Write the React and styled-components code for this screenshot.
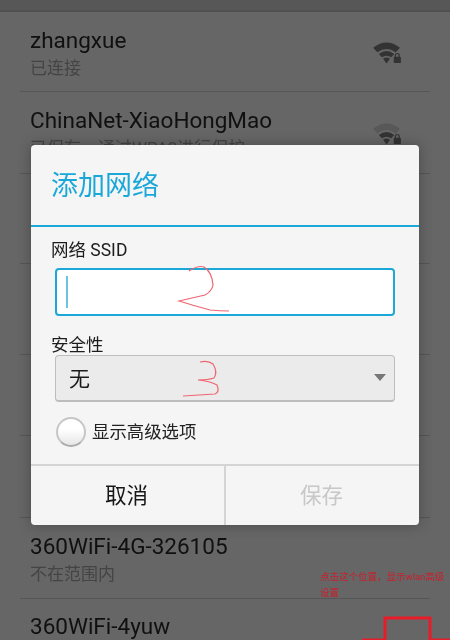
import React from "react";
import styled, { createGlobalStyle } from "styled-components";

const Global = createGlobalStyle`
  html, body { margin: 0; padding: 0; background: #666; }
  body { font-family: Roboto, "Noto Sans CJK SC", sans-serif; }
`;

const Screen = styled.div`
  position: relative;
  width: 450px;
  height: 640px;
  overflow: hidden;
  background: #666666;
  filter: blur(0.35px);
`;

const TopBar = styled.div`
  height: 10px;
  background: #575757;
  border-bottom: 2px solid #505050;
`;

const List = styled.div`
  padding: 0 20px;
`;

const Row = styled.div`
  box-sizing: border-box;
  height: ${(p) => p.$h}px;
  padding: ${(p) => p.$top}px 10px 0;
  border-bottom: 1px solid #565656;
  display: flex;
  justify-content: space-between;
`;

const RowText = styled.div`
  display: flex;
  flex-direction: column;
`;

const Name = styled.div`
  font-size: 22.5px;
  line-height: 27px;
  color: #101010;
`;

const Status = styled.div`
  font-size: 17px;
  line-height: 23px;
  margin-top: 3px;
  color: #444444;
`;

const WifiSlot = styled.div`
  margin: ${(p) => p.$top}px 18px 0 0;
  width: 29px;
  height: 24px;
`;

const Wifi = ({ faded }) => (
  <svg width="29" height="23" viewBox="0 0 30 24">
    <path d="M0 6 Q14 -5 28 6 L23.6 10.8 Q14 4 4.4 10.8 Z" fill={faded ? "#585858" : "#333333"} />
    <path d="M6 12.4 Q14 6.2 22 12.4 L18.9 16 Q14 12.6 9.1 16 Z" fill="#333333" />
    <path d="M10.4 17.4 Q14 14.7 17.6 17.4 L14 22.5 Z" fill="#333333" />
    <rect x="21.5" y="15.5" width="7.5" height="6.5" rx="1" fill="#333333" />
    <path d="M23.2 16 V14 a2 2 0 0 1 4 0 V16" fill="none" stroke="#333333" strokeWidth="1.3" />
  </svg>
);

const Dialog = styled.div`
  position: absolute;
  left: 31px;
  top: 145px;
  box-sizing: border-box;
  width: 388px;
  height: 380px;
  display: flex;
  flex-direction: column;
  background: #f5f5f5;
  border-radius: 4px;
  box-shadow: 0 0 14px rgba(0, 0, 0, 0.28);
`;

const Title = styled.div`
  box-sizing: border-box;
  height: 82px;
  padding: 22px 20px 0;
  font-size: 27px;
  line-height: 38px;
  color: #1ba8d8;
  border-bottom: 2px solid #1ba8d8;
`;

const Body = styled.div`
  flex: 1;
  padding: 12px 20px 0;
`;

const Label = styled.div`
  font-size: 17.5px;
  line-height: 22px;
  color: #1c1c1c;
`;

const Field = styled.div`
  position: relative;
  box-sizing: border-box;
  width: 340px;
  height: 48px;
  margin: 7px 0 0 4px;
  background: #ffffff;
  border: 2px solid #1ba8d8;
  border-radius: 4px;
`;

const Caret = styled.span`
  position: absolute;
  left: 9px;
  top: 6px;
  width: 2px;
  height: 32px;
  background: #6cc3e6;
`;

const SecurityLabel = styled(Label)`
  margin-top: 18px;
`;

const Select = styled.div`
  box-sizing: border-box;
  width: 340px;
  height: 47px;
  margin: -1px 0 0 4px;
  padding: 0 8px 2px 13px;
  display: flex;
  align-items: center;
  justify-content: space-between;
  background: #ebebeb;
  border: 1px solid #bdbdbd;
  border-bottom-width: 2px;
  border-radius: 4px;
  font-size: 21px;
  color: #1a1a1a;
`;

const Arrow = styled.span`
  width: 0;
  height: 0;
  border-left: 6.5px solid transparent;
  border-right: 6.5px solid transparent;
  border-top: 7px solid #777777;
`;

const CheckRow = styled.div`
  margin: 15px 0 0 5px;
  display: flex;
  align-items: center;
  gap: 6px;
  font-size: 17.4px;
  line-height: 28px;
  color: #222;
`;

const Radio = styled.span`
  box-sizing: border-box;
  width: 30px;
  height: 30px;
  border-radius: 50%;
  border: 2px solid #c6c6c6;
  border-bottom-color: #ababab;
  background: linear-gradient(#ffffff 40%, #e6e6e6);
`;

const Footer = styled.div`
  height: 59px;
  display: flex;
  border-top: 2px solid #d4d4d4;
`;

const Btn = styled.div`
  flex: 1;
  display: flex;
  align-items: center;
  justify-content: center;
  font-size: 21.5px;
  padding: 0 2px 4px 0;
  color: ${(p) => (p.$disabled ? "#c8c8c8" : "#161616")};
  & + & {
    border-left: 2px solid #d4d4d4;
  }
`;

const Ink = styled.svg`
  position: absolute;
  left: 0;
  top: 0;
  pointer-events: none;
`;

const Note = styled.div`
  position: absolute;
  left: 320px;
  top: 569px;
  width: 126px;
  font-size: 9.5px;
  line-height: 16px;
  color: #c8202c;
`;

export default function App() {
  return (
    <>
      <Global />
      <Screen>
        <TopBar />
        <List>
          <Row $h={80} $top={15}>
            <RowText><Name>zhangxue</Name><Status>已连接</Status></RowText>
            <WifiSlot $top={15}><Wifi /></WifiSlot>
          </Row>
          <Row $h={82} $top={15}>
            <RowText><Name>ChinaNet-XiaoHongMao</Name><Status>已保存，通过WPA2进行保护</Status></RowText>
            <WifiSlot $top={16}><Wifi faded /></WifiSlot>
          </Row>
          <Row $h={90} $top={14} />
          <Row $h={91} $top={14} />
          <Row $h={81} $top={14} />
          <Row $h={82} $top={14} />
          <Row $h={81} $top={15}>
            <RowText><Name>360WiFi-4G-326105</Name><Status>不在范围内</Status></RowText>
          </Row>
          <Row $h={42} $top={14}>
            <RowText><Name>360WiFi-4yuw</Name></RowText>
          </Row>
        </List>

        <Dialog>
          <Title>添加网络</Title>
          <Body>
            <Label>网络 SSID</Label>
            <Field><Caret /></Field>
            <SecurityLabel>安全性</SecurityLabel>
            <Select>无<Arrow /></Select>
            <CheckRow><Radio />显示高级选项</CheckRow>
          </Body>
          <Footer>
            <Btn>取消</Btn>
            <Btn $disabled>保存</Btn>
          </Footer>
        </Dialog>

        <Ink width="450" height="640" viewBox="0 0 450 640">
          <path d="M189 271 Q198 265 204 267 Q212 272 213 285 Q212 291 205 295 Q192 298 179 301 Q195 306 210 310 Q220 311 229 311" fill="none" stroke="#ee6670" strokeWidth="1.2" />
          <path d="M200 362 Q208 360 213 364 Q218 372 214 378 Q208 380 198 380 Q210 381 217 385 Q220 392 215 394 Q200 395 183 396" fill="none" stroke="#ee6670" strokeWidth="1.2" />
          <path d="M362 640 H385 V618 H430 V640 H450" fill="none" stroke="#e81c28" strokeWidth="3" />
        </Ink>
        <Note>点击这个位置，显示wlan高级设置</Note>
      </Screen>
    </>
  );
}
